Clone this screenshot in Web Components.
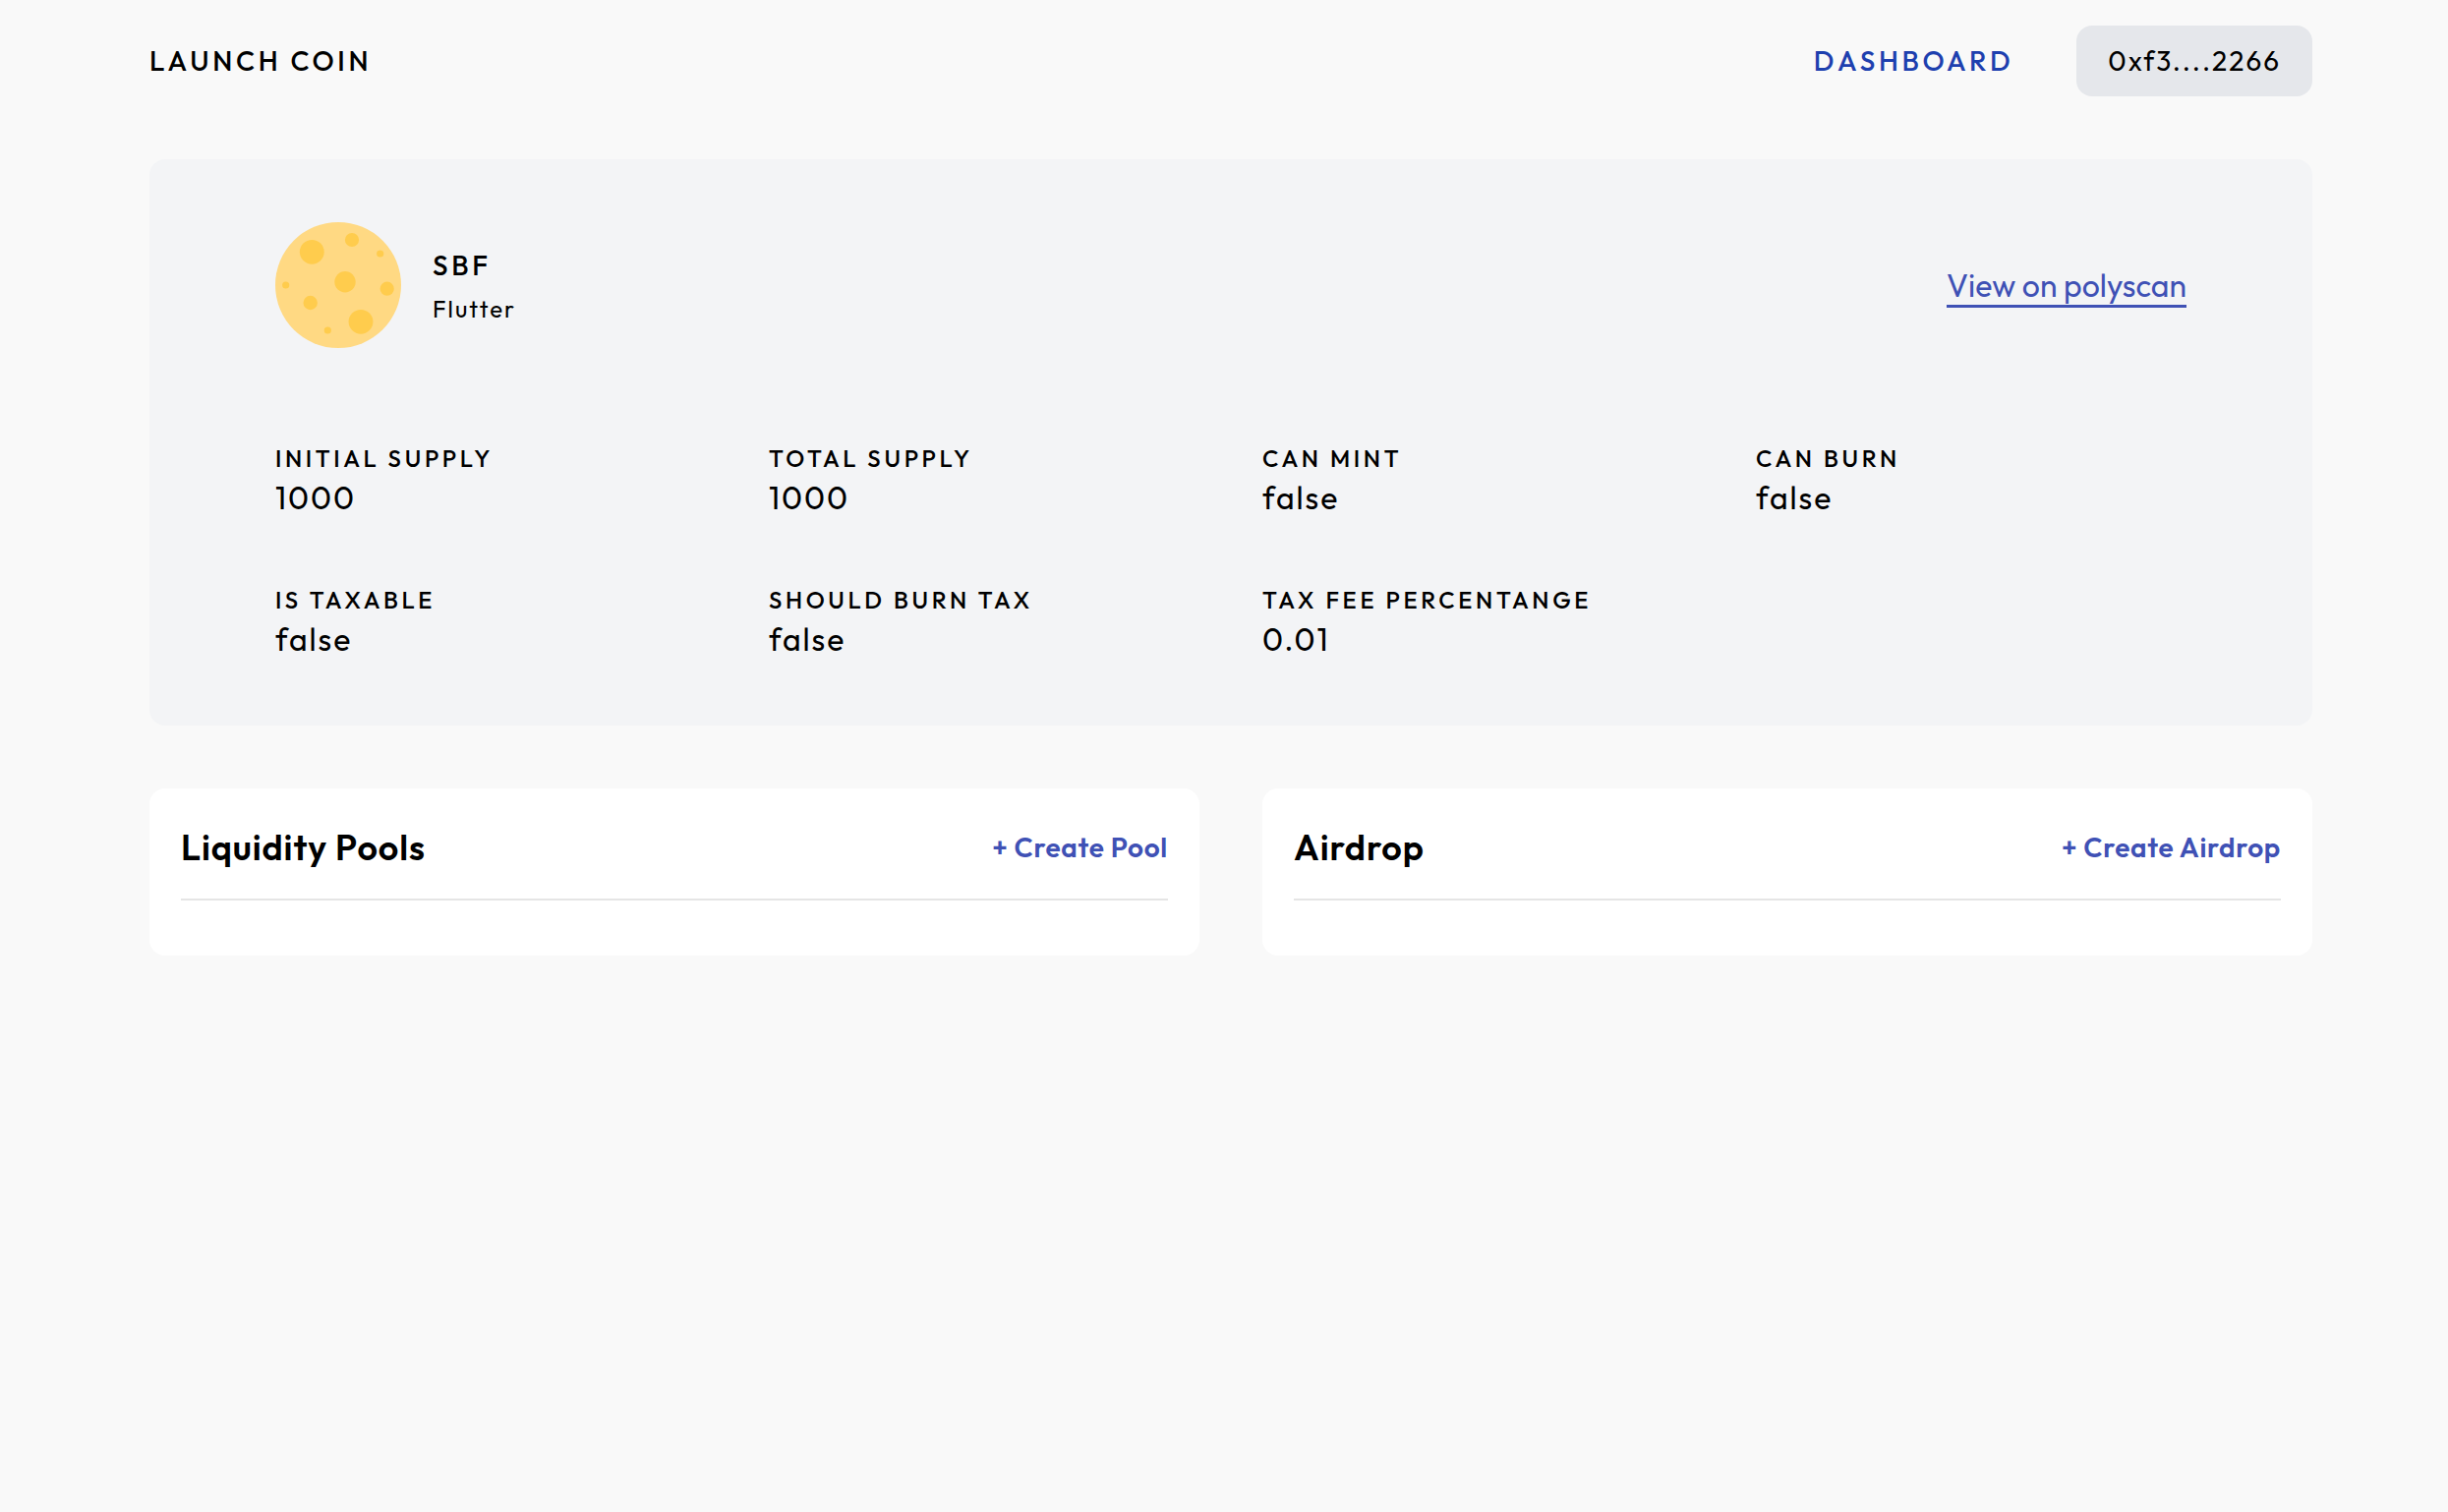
<!DOCTYPE html>
<html lang="en">
<head>
<meta charset="utf-8">
<title>Launch Coin</title>
<style>
  body { margin: 0; background: #f9f9f9; color: #000; font-family: Outfit, Lato, "Liberation Sans", sans-serif; }
</style>
</head>
<body>
<launch-app></launch-app>
<script>
const define = (name, html) => {
  const template = document.createElement('template');
  template.innerHTML = html;
  customElements.define(name, class extends HTMLElement {
    constructor() {
      super();
      this.attachShadow({ mode: 'open' }).append(template.content.cloneNode(true));
    }
  });
};

define('site-header', `
<style>
  :host { display: block; }
  header, nav { display: flex; align-items: center; }
  header { justify-content: space-between; }
  nav { gap: 64px; }
  a { color: inherit; text-decoration: none; font-size: 28px; line-height: 40px; font-weight: 500; letter-spacing: 0.13em; }
  nav a { color: #1e40af; }
  button { border: 0; border-radius: 16px; padding: 16px 32px; background: #e5e7eb; color: #000;
    font: 400 28px/40px Outfit, Lato, "Liberation Sans", sans-serif; letter-spacing: 2px; }
</style>
<header>
  <a href="#">LAUNCH COIN</a>
  <nav><a href="#dashboard">DASHBOARD</a><button type="button">0xf3....2266</button></nav>
</header>`);

define('moon-icon', `
<style>:host { display: block; width: 128px; height: 128px; } svg { display: block; }</style>
<svg viewBox="0 0 128 128" width="128" height="128" aria-hidden="true">
  <circle cx="64" cy="64" r="64" fill="#ffd983"/>
  <g fill="#ffcc4d">
    <circle cx="37.3" cy="30.3" r="12.4"/><circle cx="78" cy="18" r="7.1"/><circle cx="106.7" cy="32" r="3.6"/>
    <circle cx="10.7" cy="64" r="3.6"/><circle cx="71" cy="60.7" r="10.7"/><circle cx="113.7" cy="67.7" r="7.1"/>
    <circle cx="35.7" cy="82" r="7.2"/><circle cx="87" cy="101.3" r="12.4"/><circle cx="53.3" cy="110" r="3.6"/>
  </g>
</svg>`);

define('stat-item', `
<style>
  :host { display: block; }
  .label { font-size: 24px; line-height: 32px; font-weight: 500; letter-spacing: 0.15em; }
  .value { font-size: 32px; line-height: 48px; letter-spacing: 2px; }
</style>
<div class="label"><slot name="label"></slot></div>
<div class="value"><slot></slot></div>`);

define('token-card', `
<style>
  :host { display: block; background: #f3f4f6; border-radius: 16px; padding: 64px 128px; }
  .top, .token { display: flex; align-items: center; }
  .top { justify-content: space-between; margin-bottom: 96px; }
  .token { gap: 32px; }
  .names { display: grid; gap: 8px; }
  .symbol { font-size: 28px; line-height: 40px; font-weight: 500; letter-spacing: 0.13em; }
  .name { font-size: 24px; line-height: 32px; letter-spacing: 2px; }
  a { color: #3f51b5; text-decoration: none; font-size: 32px; line-height: 40px; padding-top: 3px; border-bottom: 3px solid; }
  .stats { display: grid; grid-template-columns: repeat(4, minmax(0, 1fr)); gap: 64px; }
</style>
<div class="top">
  <div class="token">
    <moon-icon></moon-icon>
    <div class="names">
      <div class="symbol"><slot name="symbol"></slot></div>
      <div class="name"><slot name="name"></slot></div>
    </div>
  </div>
  <a href="#polyscan">View on polyscan</a>
</div>
<div class="stats"><slot></slot></div>`);

define('action-panel', `
<style>
  :host { display: block; background: #fff; border-radius: 16px; padding: 32px 32px 56px; }
  header { display: flex; align-items: center; justify-content: space-between; padding-bottom: 24px; border-bottom: 2px solid #e5e5e5; }
  h2 { margin: 0; font-size: 36px; line-height: 56px; font-weight: 600; letter-spacing: 0.025em; }
  button { border: 0; padding: 0; background: none; color: #3f51b5; font: 600 28px/40px Outfit, Lato, "Liberation Sans", sans-serif; letter-spacing: 0.025em; }
</style>
<header><h2><slot></slot></h2><button type="button"><slot name="action"></slot></button></header>`);

define('launch-app', `
<style>
  :host { display: block; padding: 26px 138px 64px 152px; }
  main { display: grid; gap: 64px; margin-top: 64px; }
  .panels { display: grid; grid-template-columns: 1fr 1fr; gap: 64px; }
</style>
<site-header></site-header>
<main>
  <token-card>
    <span slot="symbol">SBF</span><span slot="name">Flutter</span>
    <stat-item><span slot="label">INITIAL SUPPLY</span>1000</stat-item>
    <stat-item><span slot="label">TOTAL SUPPLY</span>1000</stat-item>
    <stat-item><span slot="label">CAN MINT</span>false</stat-item>
    <stat-item><span slot="label">CAN BURN</span>false</stat-item>
    <stat-item><span slot="label">IS TAXABLE</span>false</stat-item>
    <stat-item><span slot="label">SHOULD BURN TAX</span>false</stat-item>
    <stat-item><span slot="label">TAX FEE PERCENTANGE</span>0.01</stat-item>
  </token-card>
  <div class="panels">
    <action-panel>Liquidity Pools<span slot="action">+ Create Pool</span></action-panel>
    <action-panel>Airdrop<span slot="action">+ Create Airdrop</span></action-panel>
  </div>
</main>`);
</script>
</body>
</html>
